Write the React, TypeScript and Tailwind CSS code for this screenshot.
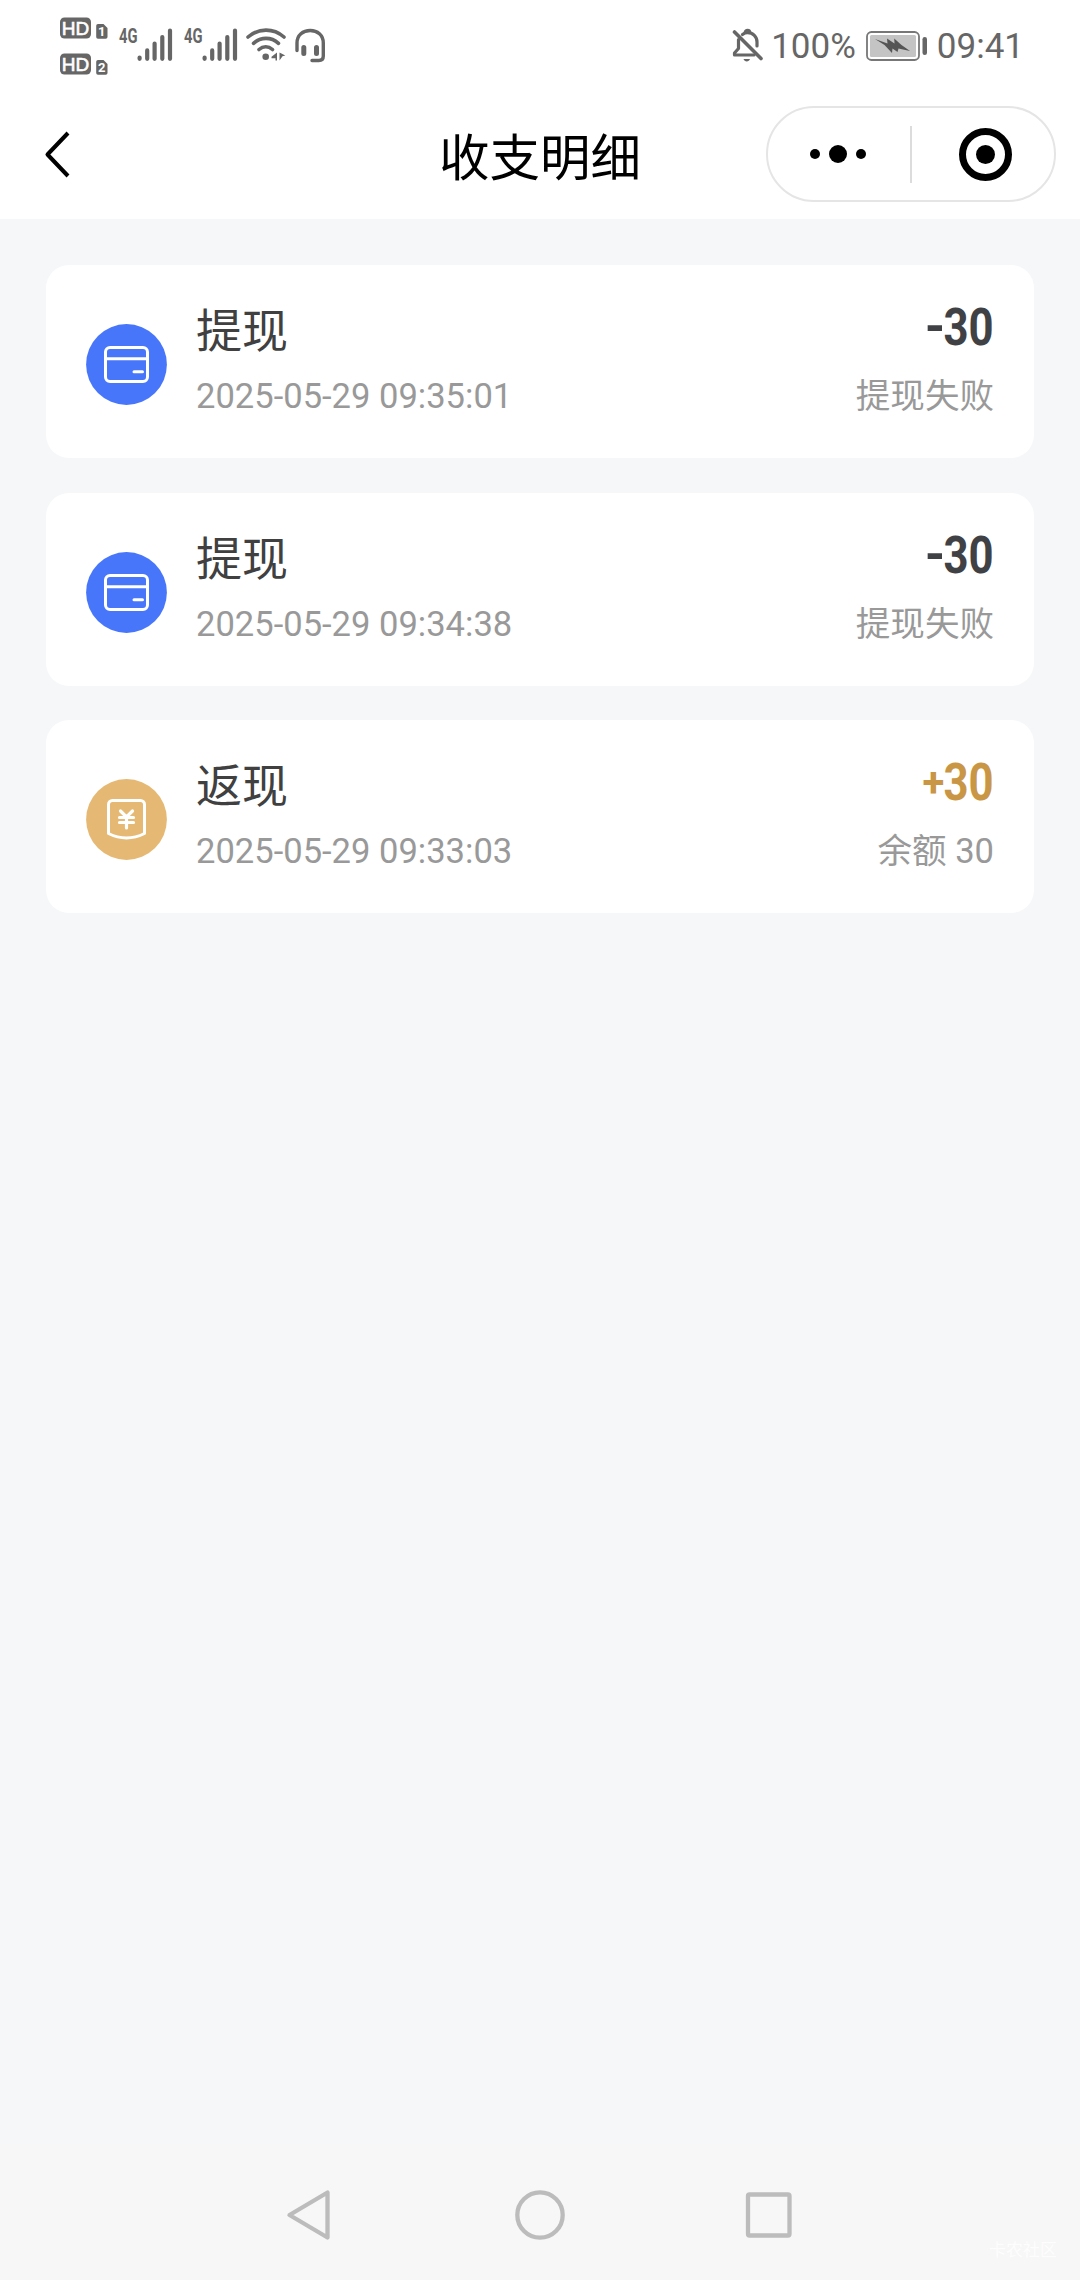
const CJK = "font-['Roboto','Noto_Sans_CJK_SC',sans-serif]";

type Entry = {
  kind: "withdraw" | "cashback";
  title: string;
  time: string;
  sign: "-" | "+";
  amount: string;
  note: string;
};

const entries: Entry[] = [
  { kind: "withdraw", title: "提现", time: "2025-05-29 09:35:01", sign: "-", amount: "30", note: "提现失败" },
  { kind: "withdraw", title: "提现", time: "2025-05-29 09:34:38", sign: "-", amount: "30", note: "提现失败" },
  { kind: "cashback", title: "返现", time: "2025-05-29 09:33:03", sign: "+", amount: "30", note: "余额 30" },
];

function HdBadge({ sim }: { sim: string }) {
  return (
    <svg width="48" height="22" viewBox="0 0 48 22">
      <rect x="0" y="0.5" width="31" height="21" rx="4.5" fill="#666" />
      <text x="15.5" y="17.6" textAnchor="middle" fontFamily="Liberation Sans" fontSize="19" fill="#fff" stroke="#fff" strokeWidth="0.6">
        HD
      </text>
      <path d="M38 7h5.5l4 4v9a1.8 1.8 0 0 1-1.8 1.8H38a1.8 1.8 0 0 1-1.8-1.8V8.8A1.8 1.8 0 0 1 38 7z" fill="#666" />
      <text x="41.8" y="19" textAnchor="middle" fontFamily="Roboto" fontWeight="700" fontSize="13" fill="#fff">
        {sim}
      </text>
    </svg>
  );
}

function Signal() {
  return (
    <svg width="60" height="44" viewBox="-4 -10 60 44">
      <text x="0" y="14.8" fontFamily="Roboto" fontWeight="700" fontSize="20" textLength="18.5" lengthAdjust="spacingAndGlyphs" fill="#666">
        4G
      </text>
      <g stroke="#666" strokeWidth="4.2" strokeLinecap="round">
        <path d="M20.6 29.5v1.3M28.2 22.4v8.4M35.6 15.5v15.3M43.3 9v21.8M51 2.6v28.2" />
      </g>
    </svg>
  );
}

function Wifi() {
  return (
    <svg width="41" height="34" viewBox="0 0 41 34" fill="none" stroke="#666" strokeWidth="3.6" strokeLinecap="round">
      <path d="M2 9C12.500-.2 27.500-.2 38 9M7.500 15.300c7.400-6.600 17.600-6.600 25 0M13 21.500c4.200-3.700 9.300-3.700 13.500 0" />
      <circle cx="19.700" cy="28.800" r="3.300" fill="#666" stroke="none" />
      <path d="M31 24.500v8h-1.500v-2.300h-4v-1.400zM33.500 24.500l5.800 3-2.800.7-3 4.300z" fill="#666" stroke="none" />
    </svg>
  );
}

function Headset() {
  return (
    <svg width="31" height="35" viewBox="0 0 31 35" fill="none" stroke="#666" strokeWidth="3.400" strokeLinecap="round">
      <path d="M2 22.500V15C2 7 8 2.500 15.200 2.500S28.300 7 28.300 15v13c0 3.300-1.500 4.500-4.500 4.500h-6.800" />
      <path d="M8.800 19.500v6M21.500 19.500v6" strokeWidth="5" />
    </svg>
  );
}

function BellOff() {
  return (
    <svg width="32" height="35" viewBox="0 0 32 35" fill="none" stroke="#666" strokeWidth="3.200" strokeLinecap="round" strokeLinejoin="round">
      <path d="M2.500 4l26.500 26.500" strokeWidth="3.600" />
      <path d="M6.500 11.500v9L2.500 25v2H22" />
      <path d="M10.500 6.500c2-1.500 3-1.800 5-1.800 5.500 0 9.500 4 9.500 9.300v4" />
      <path d="M13 4.500c0-3.200 5-3.200 5 0" strokeWidth="2.800" />
      <path d="M11.500 31h6.500c-.8 3.200-5.700 3.200-6.500 0z" fill="#666" stroke="none" />
    </svg>
  );
}

function Battery() {
  return (
    <svg width="62" height="30" viewBox="0 0 62 30">
      <rect x="1" y="1" width="52" height="28" rx="4.500" fill="#fff" stroke="#777" strokeWidth="1.800" />
      <rect x="4" y="4" width="46" height="22" rx="1.500" fill="#c4c4c4" />
      <path d="M9 8l12.500 4.500-.5-5 7.500 5-.3-5L35.500 14l8.500 6-11.500-2.500-1 3.500-5-3.500-.5 4.500L18.500 14z" fill="#555" />
      <rect x="56.500" y="6" width="4.500" height="18" rx="2.200" fill="#666" />
    </svg>
  );
}

function StatusBar() {
  return (
    <div className="flex h-[90px] items-start text-[#666]">
      <div className="ml-[60px] mt-[17px] flex flex-col gap-[14px]">
        <HdBadge sim="1" />
        <HdBadge sim="2" />
      </div>
      <div className="ml-[7px] mt-[18px] flex gap-[5px]">
        <Signal />
        <Signal />
      </div>
      <div className="ml-[6px] mt-[28px] flex gap-[8px]">
        <Wifi />
        <Headset />
      </div>
      <div className="ml-auto mr-[56px] mt-[28px] flex">
        <BellOff />
        <span className="ml-[7px] mt-px text-[35px] leading-[36px] font-['Roboto']">100%</span>
        <div className="ml-[10px] mt-[3px]">
          <Battery />
        </div>
        <span className="ml-[9px] mt-px text-[35px] leading-[36px] font-['Roboto']">09:41</span>
      </div>
    </div>
  );
}

function Header() {
  return (
    <header className="grid h-[129px] grid-cols-3 text-black">
      <div className="pl-[43px] pt-[40px]">
        <svg width="28" height="50" viewBox="0 0 28 50" fill="none" stroke="#000" strokeWidth="4" strokeLinejoin="round">
          <path d="M25 3L4.500 24.500l20.500 21.500" />
        </svg>
      </div>
      <h1 className="pt-[29px] text-center text-[50.500px] leading-[70px] font-['Noto_Sans_CJK_SC',sans-serif]">收支明细</h1>
      <div className="flex justify-end pr-[24px] pt-[16px]">
        <div className="flex h-[96px] w-[290px] items-center rounded-full border-2 border-[#e5e5e5]">
          <div className="flex w-[142px] items-center justify-center gap-[9px] pr-[2px]">
            <span className="size-[10px] rounded-full bg-black" />
            <span className="size-[18px] rounded-full bg-black" />
            <span className="size-[10px] rounded-full bg-black" />
          </div>
          <span className="h-[57px] w-[2px] bg-[#dcdcdc]" />
          <div className="flex flex-1 justify-center pl-[5px]">
            <span className="flex size-[53px] items-center justify-center rounded-full border-[7px] border-black">
              <span className="size-[19px] rounded-full bg-black" />
            </span>
          </div>
        </div>
      </div>
    </header>
  );
}

function CardIcon() {
  return (
    <svg width="81" height="81" viewBox="0 0 81 81" fill="none" stroke="#fff" strokeWidth="3">
      <circle cx="40.500" cy="40.500" r="40.400" fill="#4776fb" stroke="none" />
      <rect x="19.500" y="23.500" width="42" height="34" rx="4.500" />
      <path d="M19.500 34.700h42" />
      <path d="M48 47.800h8.500" strokeLinecap="round" />
    </svg>
  );
}

function YenIcon() {
  return (
    <svg width="81" height="81" viewBox="0 0 81 81" fill="none" stroke="#fff" strokeWidth="3" strokeLinecap="round">
      <circle cx="40.500" cy="40.500" r="40.400" fill="#e5b973" stroke="none" />
      <path d="M26.500 21.500h28a4 4 0 0 1 4 4V54.500q-9 4.500-18 4.500t-18-4.500V25.500a4 4 0 0 1 4-4z" strokeLinejoin="round" />
      <path d="M34.500 32l6 6 6-6M33.500 38.500h14M33.500 43.500h14M40.500 38.500v10.500" strokeWidth="3.200" />
    </svg>
  );
}

function EntryCard({ entry }: { entry: Entry }) {
  const gain = entry.kind === "cashback";
  return (
    <li className="flex h-[193px] rounded-[23px] bg-white px-10">
      <div className="mt-[59px]">{gain ? <YenIcon /> : <CardIcon />}</div>
      <div className={`ml-[29px] mt-[34px] ${CJK}`}>
        <div className="text-[46px] leading-[64px] text-[#404040]">{entry.title}</div>
        <div className="mt-[9px] text-[34.56px] leading-[48px] text-[#999]">{entry.time}</div>
      </div>
      <div className={`ml-auto mt-[33px] flex flex-col items-end ${CJK}`}>
        <div className={`flex h-[60px] text-[52px] leading-[60px] font-bold ${gain ? "text-[#c99646]" : "text-[#404145]"}`}>
          {gain ? (
            <span className="-mr-[10px] text-[40px] leading-[60px]">{entry.sign}</span>
          ) : (
            <span className="-mr-[11px] -mt-[1px]">{entry.sign}</span>
          )}
          <span className="origin-right scale-x-[0.84]">{entry.amount}</span>
        </div>
        <div className="mt-[14px] text-[34.56px] leading-[48px] text-[#999]">{entry.note}</div>
      </div>
    </li>
  );
}

function NavBar() {
  return (
    <nav className="relative flex h-[136px] items-center justify-center bg-[#f7f7f7] pt-[6px]">
      <svg width="508" height="52" viewBox="0 0 508 52" fill="none" stroke="#bcbcbc" strokeWidth="4.300" strokeLinejoin="round">
        <path d="M41.500 3.500v45L3.500 26z" />
        <circle cx="254" cy="26" r="22.700" />
        <rect x="462" y="5.500" width="41.500" height="41" rx="1.500" />
      </svg>
      <span className="absolute bottom-[19px] right-[23px] text-[17px] leading-[24px] text-[#fdfdfd] font-['Noto_Sans_CJK_SC',sans-serif]">
        卡农社区
      </span>
    </nav>
  );
}

export default function App() {
  return (
    <div className="flex h-[2280px] w-[1080px] flex-col bg-[#f5f7f9]">
      <div className="h-[219px] bg-white">
        <StatusBar />
        <Header />
      </div>
      <ul className="flex flex-1 flex-col gap-[34.5px] px-[46px] pt-[46px]">
        {entries.map((entry) => (
          <EntryCard key={entry.time} entry={entry} />
        ))}
      </ul>
      <NavBar />
    </div>
  );
}
